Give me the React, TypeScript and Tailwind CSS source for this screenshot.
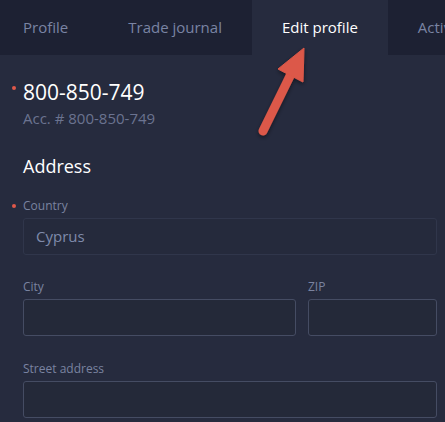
import React from 'react';

const tabs = [
  { label: 'Profile', cls: 'pl-[23px] pr-[30px]' },
  { label: 'Trade journal', cls: 'px-[30px]' },
  { label: 'Edit profile', cls: 'px-[30px]', active: true },
  { label: 'Activity', cls: 'px-[30px]' },
];

const Field = ({ label, value, required, className }: any) => (
  <div className={`relative ${className || ''}`}>
    {required && <span className="absolute -left-[11px] top-[6px] w-[4px] h-[4px] rounded-full bg-[#e0584a]" />}
    <p className="text-[12px] leading-[16px] text-[#7a83a0]">{label}</p>
    <div
      className={`mt-[4px] h-[37px] rounded-[3px] border flex items-center px-[12px] text-[15px] text-[#7f8aab] ${
        value ? 'border-[#30364b] bg-[#252a3c]' : 'border-[#454c63] bg-[#242939]'
      }`}
    >
      {value}
    </div>
  </div>
);

export default function App() {
  return (
    <div
      className="relative w-[445px] h-[422px] overflow-hidden bg-[#262b3e]"
      style={{ fontFamily: '"Open Sans", "Noto Sans", sans-serif' }}
    >
      {/* tabs */}
      <div className="flex h-[55px] bg-[#1d2133] whitespace-nowrap">
        {tabs.map((t) => (
          <div
            key={t.label}
            className={`${t.cls} flex items-center text-[15px] shrink-0 ${
              t.active ? 'bg-[#262b3e] text-white' : 'text-[#7a84a3]'
            }`}
          >
            {t.label}
          </div>
        ))}
      </div>

      <div className="pl-[23px] pr-[8px] pt-[23px]">
        <div className="relative">
          <span className="absolute -left-[11px] top-[8px] w-[4px] h-[4px] rounded-full bg-[#e0584a]" />
          <h2 className="text-[21px] leading-[28px] text-white">800-850-749</h2>
          <p className="text-[15px] leading-[20px] text-[#6b7390] mt-[2px]">Acc. # 800-850-749</p>
        </div>

        <h3 className="text-[18px] leading-[24px] text-white mt-[26px]">Address</h3>

        <Field className="mt-[20px]" label="Country" value="Cyprus" required />

        <div className="flex gap-[12px] mt-[24px]">
          <Field className="w-[273px]" label="City" />
          <Field className="flex-1" label="ZIP" />
        </div>

        <Field className="mt-[25px]" label="Street address" />
      </div>

      {/* annotation arrow */}
      <svg className="absolute left-0 top-0 pointer-events-none" width="445" height="422">
        <defs>
          <filter id="sh" x="-50%" y="-50%" width="200%" height="200%">
            <feDropShadow dx="0" dy="2" stdDeviation="2" floodColor="#000" floodOpacity="0.45" />
          </filter>
        </defs>
        <g filter="url(#sh)" fill="#dc5848" stroke="#dc5848">
          <line x1="263" y1="131" x2="290" y2="76" strokeWidth="9" strokeLinecap="round" />
          <polygon points="304,48 303,82 278,69" strokeWidth="1" strokeLinejoin="round" />
        </g>
      </svg>
    </div>
  );
}
